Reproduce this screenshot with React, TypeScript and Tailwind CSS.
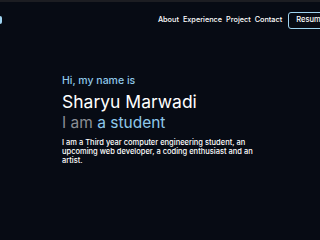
import React from 'react';

export default function App() {
  return (
    <div className="w-[320px] h-[240px] overflow-hidden bg-[#070b14] font-['Inter',sans-serif] text-white">
      <div className="h-[2px] bg-[#1c1d22]" />
      <nav className="flex items-center justify-between h-[36px]">
        <div className="w-[2px] h-[8px] bg-[#9fd4f0] rounded-r" />
        <div className="flex items-center">
          <ul className="flex gap-[4px] text-[7.3px] font-medium mr-[6px]">
            <li>About</li>
            <li>Experience</li>
            <li>Project</li>
            <li>Contact</li>
          </ul>
          <button className="border border-[#9fd4f0] rounded-[3px] pl-[7px] pr-[4px] h-[17px] text-[7.5px] font-medium mr-[-10px]">
            Resume
          </button>
        </div>
      </nav>
      <section className="pl-[62px] pt-[37px]">
        <p className="text-[#8fc8ea] text-[10.5px] leading-[12px] font-medium">Hi, my name is</p>
        <h1 className="text-[17.5px] leading-[22px] mt-[4px]">Sharyu Marwadi</h1>
        <h2 className="text-[15.5px] leading-[20px] text-[#8b8e94]">
          I am <span className="text-[#8fc8ea]">a student</span>
        </h2>
        <p className="text-[7.5px] leading-[9px] font-medium w-[192px] mt-[5px]">
          I am a Third year computer engineering student, an upcoming web developer, a coding enthusiast and an artist.
        </p>
      </section>
    </div>
  );
}
